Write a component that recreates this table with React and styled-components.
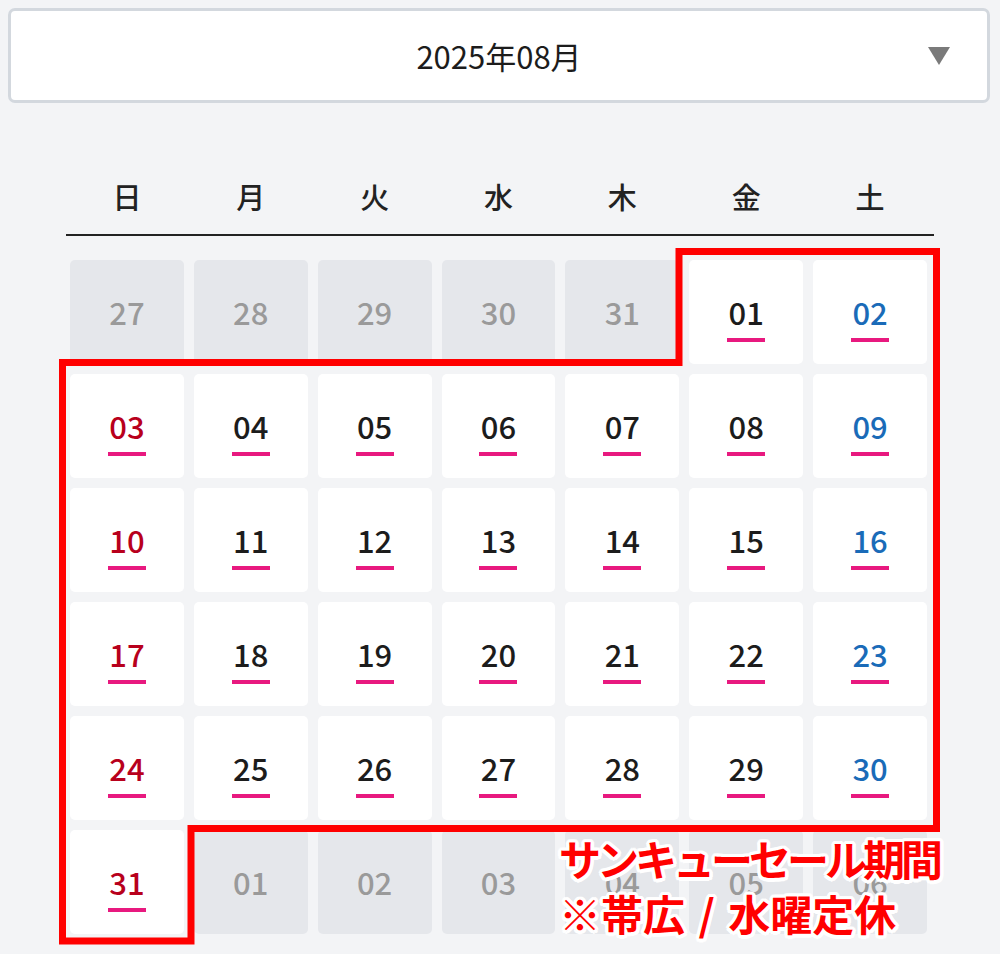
import React from "react";
import styled, { createGlobalStyle } from "styled-components";

const GlobalStyle = createGlobalStyle`
  html, body {
    margin: 0;
    padding: 0;
    background: #f3f4f6;
  }
  body {
    font-family: "Noto Sans CJK JP", "Noto Sans", sans-serif;
    color: #222;
  }
`;

const WEEK = ["日", "月", "火", "水", "木", "金", "土"];

// [label, inMonth]
const DAYS = [
  ["27", false], ["28", false], ["29", false], ["30", false], ["31", false], ["01", true], ["02", true],
  ["03", true], ["04", true], ["05", true], ["06", true], ["07", true], ["08", true], ["09", true],
  ["10", true], ["11", true], ["12", true], ["13", true], ["14", true], ["15", true], ["16", true],
  ["17", true], ["18", true], ["19", true], ["20", true], ["21", true], ["22", true], ["23", true],
  ["24", true], ["25", true], ["26", true], ["27", true], ["28", true], ["29", true], ["30", true],
  ["31", true], ["01", false], ["02", false], ["03", false], ["04", false], ["05", false], ["06", false],
];

function App() {
  return (
    <Page>
      <GlobalStyle />
      <MonthSelect>
        <span>2025年08月</span>
        <Caret viewBox="0 0 22 18">
          <polygon points="0,0 22,0 11,18" fill="#7a7a7a" />
        </Caret>
      </MonthSelect>

      <Calendar>
        <WeekRow>
          {WEEK.map((w) => (
            <WeekDay key={w}>{w}</WeekDay>
          ))}
        </WeekRow>

        <DayGrid>
          {DAYS.map(([label, inMonth], i) => {
            const col = i % 7;
            const tone = !inMonth ? "out" : col === 0 ? "sun" : col === 6 ? "sat" : "normal";
            return (
              <DayCell key={i} $in={inMonth}>
                <DayNum $tone={tone}>{label}</DayNum>
                <Mark $show={inMonth} />
              </DayCell>
            );
          })}

          <Outline viewBox="-20 -20 900 720">
            <path
              d="M 609 -8.5 L 866.5 -8.5 L 866.5 568.5 L 121 568.5 L 121 681 L -7.5 681 L -7.5 102.5 L 609 102.5 Z"
              fill="none"
              stroke="#ff0000"
              strokeWidth="7"
            />
          </Outline>

          <Note>
            <NoteLine $tight>サンキューセール期間</NoteLine>
            <NoteLine>※帯広 / 水曜定休</NoteLine>
          </Note>
        </DayGrid>
      </Calendar>
    </Page>
  );
}

export default App;

const Page = styled.div`
  padding: 8px 10px 20px 8px;
`;

const MonthSelect = styled.div`
  position: relative;
  height: 89px;
  background: #fff;
  border: 3px solid #d3d8de;
  border-radius: 7px;
  display: flex;
  align-items: center;
  justify-content: center;
  font-size: 31px;
  color: #1c1c1c;
`;

const Caret = styled.svg`
  position: absolute;
  right: 37px;
  top: 36px;
  width: 22px;
  height: 18px;
`;

const Calendar = styled.div`
  margin: 0 56px 0 58px;
`;

const WeekRow = styled.div`
  margin-top: 73px;
  display: grid;
  grid-template-columns: repeat(7, 1fr);
  column-gap: 10px;
  padding: 0 7px 18px 4px;
  border-bottom: 2px solid #222;
`;

const WeekDay = styled.div`
  height: 40px;
  line-height: 40px;
  text-align: center;
  font-size: 29px;
  font-weight: 500;
  color: #222;
`;

const DayGrid = styled.div`
  position: relative;
  margin: 24px 0 0 4px;
  width: 857px;
  display: grid;
  grid-template-columns: repeat(7, 1fr);
  grid-auto-rows: 104px;
  gap: 10px;
`;

const DayCell = styled.div`
  background: ${(p) => (p.$in ? "#ffffff" : "#e5e7eb")};
  border-radius: 5px;
  display: flex;
  flex-direction: column;
  align-items: center;
  padding-top: 36px;
  box-sizing: border-box;
`;

const TONES = {
  out: "#9a9a9a",
  sun: "#b8001c",
  sat: "#1a6bb8",
  normal: "#1c1c1c",
};

const DayNum = styled.div`
  font-size: 31px;
  line-height: 31px;
  font-weight: 500;
  color: ${(p) => TONES[p.$tone]};
`;

const Mark = styled.div`
  width: 38px;
  height: 4px;
  margin-top: 11px;
  background: #e8197f;
  visibility: ${(p) => (p.$show ? "visible" : "hidden")};
`;

const Outline = styled.svg`
  position: absolute;
  left: -20px;
  top: -20px;
  width: 900px;
  height: 720px;
  pointer-events: none;
  overflow: visible;
`;

const Note = styled.div`
  position: absolute;
  left: 489px;
  top: 570px;
  font-size: 42px;
  line-height: 55px;
  font-weight: 700;
  color: #ff0000;
  white-space: nowrap;
  text-shadow:
    3.5px 0 0 #fff, -3.5px 0 0 #fff, 0 3.5px 0 #fff, 0 -3.5px 0 #fff,
    2.5px 2.5px 0 #fff, -2.5px 2.5px 0 #fff, 2.5px -2.5px 0 #fff, -2.5px -2.5px 0 #fff,
    3px 1.5px 0 #fff, -3px 1.5px 0 #fff, 3px -1.5px 0 #fff, -3px -1.5px 0 #fff,
    1.5px 3px 0 #fff, -1.5px 3px 0 #fff, 1.5px -3px 0 #fff, -1.5px -3px 0 #fff;
`;

const NoteLine = styled.div`
  letter-spacing: ${(p) => (p.$tight ? "-4px" : "0")};
  word-spacing: ${(p) => (p.$tight ? "0" : "4px")};
`;
